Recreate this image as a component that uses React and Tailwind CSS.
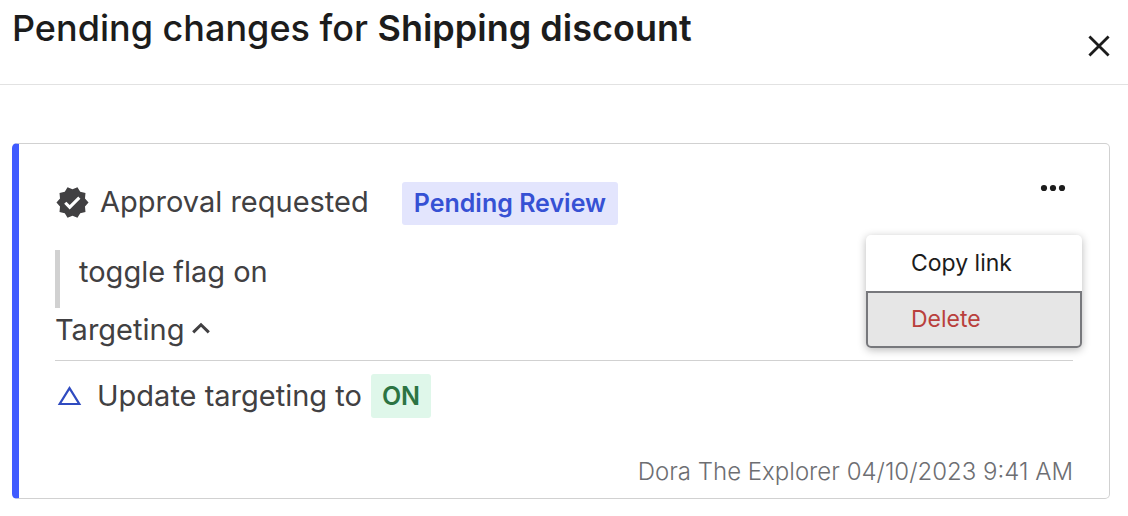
import React from "react";
import { MdVerified } from "react-icons/md";

function CloseIcon() {
  return (
    <svg className="size-6" viewBox="0 0 24 24" fill="none" stroke="currentColor" strokeWidth="2.8" aria-hidden="true">
      <path d="M2.4 2.4 21.6 21.6M21.6 2.4 2.4 21.6" />
    </svg>
  );
}

function OverflowMenu() {
  return (
    <div className="relative h-5">
      <button type="button" aria-label="More actions" aria-expanded="true" className="flex h-3 w-10 items-center justify-center text-[#1c1c1c]">
        <svg className="h-3 w-7" viewBox="0 0 28 12" fill="currentColor" aria-hidden="true">
          <circle cx="5" cy="6" r="3.1" />
          <circle cx="14" cy="6" r="3.1" />
          <circle cx="23" cy="6" r="3.1" />
        </svg>
      </button>
      <div role="menu" className="absolute top-[53px] -right-[9px] z-10 w-[216px] rounded-[5px] bg-white text-[23px] shadow-[0_2px_8px_rgba(0,0,0,0.28)]">
        <button type="button" role="menuitem" className="block h-14 w-full rounded-t-[5px] pl-[45px] text-left text-[#1c1c1c]">
          Copy link
        </button>
        <button type="button" role="menuitem" className="block h-[57px] w-full rounded-b-[5px] border-2 border-[#77787c] bg-[#e6e6e6] pl-[43px] text-left text-[#b9403c]">
          Delete
        </button>
      </div>
    </div>
  );
}

export default function App() {
  return (
    <div className="bg-white font-['Inter',sans-serif] text-[#414042]">
      <header className="flex h-[85px] items-start justify-between border-b border-[#e2e2e2] pr-[17px] pl-3 text-[#1c1c1c]">
        <h1 className="pt-1 text-4xl leading-12 font-medium">
          Pending changes for <strong className="font-semibold">Shipping discount</strong>
        </h1>
        <button type="button" aria-label="Close" className="mt-[34px]">
          <CloseIcon />
        </button>
      </header>

      <main className="pt-[58px] pr-[18px] pb-4 pl-3">
        <article className="rounded-[5px] border border-l-[7px] border-[#d1d1d1] border-l-[#405bff] px-9 pt-[38px] pb-2">
          <div className="flex items-start justify-between">
            <div className="flex items-start">
              <h2 className="flex items-center gap-2.5 text-[29px] leading-10 font-normal">
                <MdVerified className="size-[35px]" aria-hidden="true" />
                Approval requested
              </h2>
              <span className="ml-[33px] rounded-[3px] bg-[#e3e5fd] px-3 text-[25px] leading-[43px] font-semibold text-[#3651d4]">
                Pending Review
              </span>
            </div>
            <OverflowMenu />
          </div>

          <blockquote className="mt-[25px] h-[58px] border-l-[5px] border-[#d1d1d1] pl-[19px] text-[29px] leading-11">
            toggle flag on
          </blockquote>

          <section>
            <h3 className="border-b border-[#d1d1d1] text-[29px] leading-11 font-normal">
              <button type="button" aria-expanded="true" className="flex h-[52px] items-start gap-2">
                Targeting
                <svg className="mt-[14px] h-3 w-[18px]" viewBox="0 0 18 12" fill="none" stroke="currentColor" strokeWidth="3" aria-hidden="true">
                  <path d="M1.2 10.4 9 2.8l7.8 7.6" />
                </svg>
              </button>
            </h3>
            <p className="mt-[13px] flex items-center text-[29px] leading-11">
              <svg className="mx-[2px] h-5 w-[25px]" viewBox="0 0 25 20" fill="none" stroke="#2f4bc0" strokeWidth="2.2" aria-hidden="true">
                <path d="M12.5 2.2 22.3 18H2.7z" />
              </svg>
              <span className="ml-[13px]">Update targeting to</span>
              <span className="ml-[9px] rounded-[3px] bg-[#dff7ea] px-[11px] text-[25px] leading-11 font-semibold text-[#2c7443]">ON</span>
            </p>
          </section>

          <p className="mt-9 text-right text-2xl leading-9 font-light text-[#6d6e72]">
            Dora The Explorer 04/10/2023 9:41 AM
          </p>
        </article>
      </main>
    </div>
  );
}
